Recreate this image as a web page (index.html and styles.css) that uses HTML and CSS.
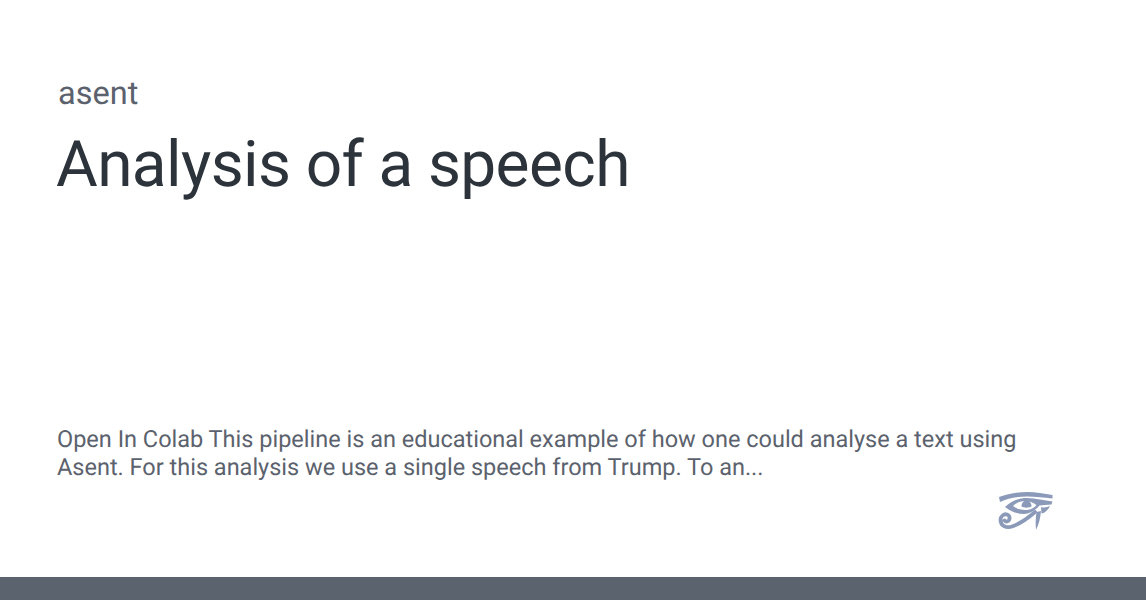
FILE: index.html
```html
<!DOCTYPE html>
<html lang="en">
<head>
<meta charset="utf-8">
<title>Analysis of a speech</title>
<link rel="stylesheet" href="styles.css">
</head>
<body>
<main class="card">
  <header class="head">
    <div class="site">asent</div>
    <h1 class="title">Analysis of a speech</h1>
  </header>
  <p class="desc">Open In Colab This pipeline is an educational example of how one could analyse a text using Asent. For this analysis we use a single speech from Trump. To an...</p>
  <div class="logo-row">
    <svg class="logo" width="56" height="40" viewBox="0 0 56 40" aria-hidden="true">
      <g class="logo-fill">
        <path d="M1 6 C10 2.500 20 1 29 1 C38 1 46 2.500 54.500 4 L54.500 7.500 C46 6.500 38 5.500 29 5.500 C19 5.500 10 7.500 2 11 Z"/>
        <path d="M7 16 C13 10 21 7 29 7 C38 7 46 9.500 54.500 10.500 L53.500 13.500 C49 14 45 14 41.500 14.500 C37 19.500 32 23 26 23 C19 23 12 20 7 16 Z M15 15 C18 17.500 23 19 27 19 C32 19 36 17.500 38.500 14 C35 11.500 31 10 27 10 C22 10 18 12 15 15 Z"/>
        <path d="M23.500 15.500 C23.500 12 25.500 9.500 28.500 9.500 C31.500 9.500 33.500 12 33.500 15.500 C31 17 26 17 23.500 15.500 Z"/>
        <path d="M38.500 21 L43 20 C42.500 26 41 33 38 39 C37.500 33 37.500 27 38.500 21 Z"/>
        <path d="M43 16 C46 17 49 16.500 52 15 C50 19 47 22 43.500 22.500 Z"/>
      </g>
      <path class="logo-line" d="M37 21 C29 28 21 33 14 35.500 C8 37.500 2.500 34.500 2.500 29 C2.500 25 6 22.500 9 23.500 C12 24.500 12.500 28.500 10 30 C8.500 31 7 30.500 6.500 29.500"/>
    </svg>
  </div>
</main>
<div class="band"></div>
</body>
</html>
```
FILE: styles.css
```css
* { box-sizing: border-box; }
html, body { margin: 0; padding: 0; }
body {
  width: 1146px;
  height: 600px;
  overflow: hidden;
  background: #fff;
  font-family: Roboto, "Liberation Sans", sans-serif;
  text-rendering: geometricPrecision;
  display: flex;
  flex-direction: column;
}
.card {
  flex: 1;
  display: flex;
  flex-direction: column;
  padding: 73px 57px 0;
}
.head { flex: 1; }
.site {
  margin-left: 1px;
  font-size: 32.5px;
  line-height: 40px;
  color: #5b626d;
}
.title {
  margin: 12px 0 0 -1px;
  font-size: 64px;
  line-height: 80px;
  font-weight: 400;
  letter-spacing: -0.62px;
  color: #2d333b;
}
.desc {
  margin: 0;
  width: 1000px;
  font-size: 23.5px;
  line-height: 28px;
  color: #5b626d;
}
.logo-row {
  display: flex;
  justify-content: flex-end;
  padding: 10px 35px 0 0;
  height: 96px;
}
.logo-fill { fill: #8c9aba; }
.logo-line {
  fill: none;
  stroke: #8c9aba;
  stroke-width: 3.8;
  stroke-linecap: round;
}
.band {
  height: 23px;
  background: #5b636e;
}
```
